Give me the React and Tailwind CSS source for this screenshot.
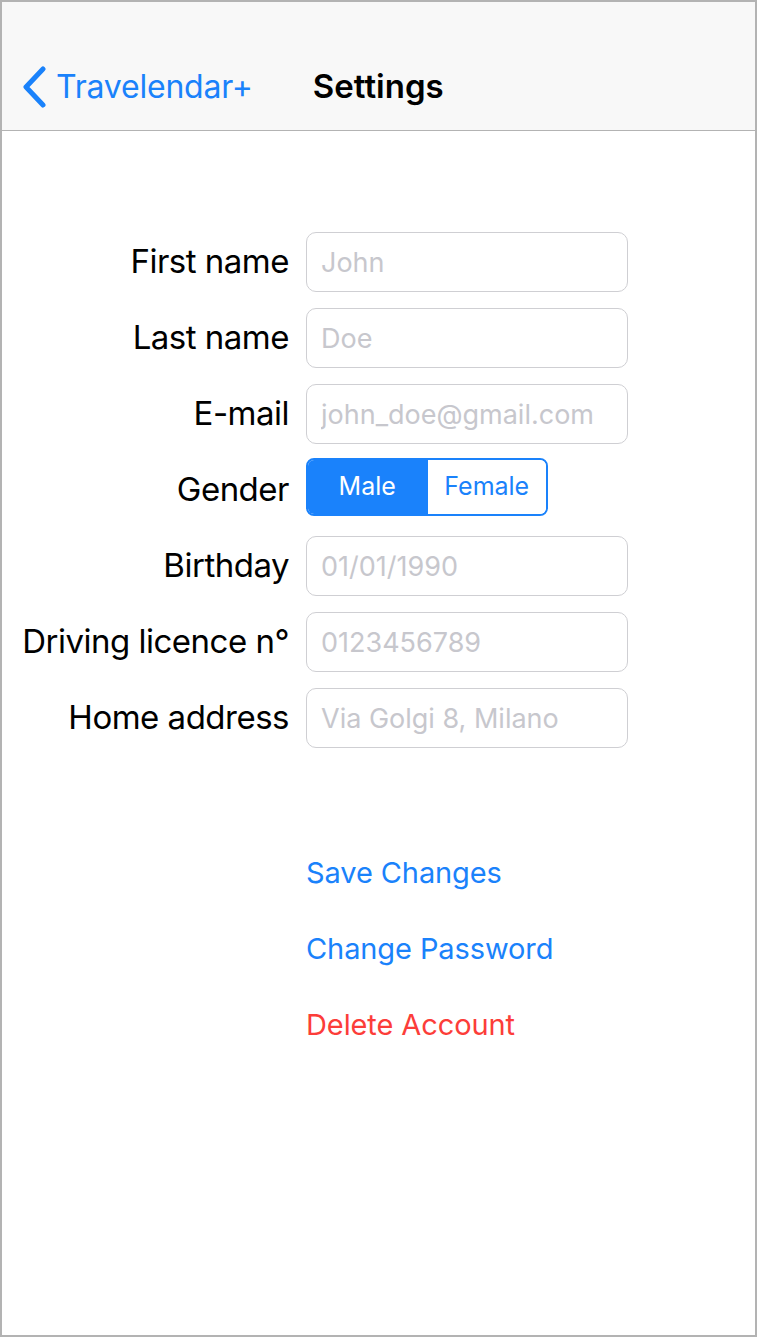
import React, { useState } from "react";

const fields = [
  { label: "First name", placeholder: "John" },
  { label: "Last name", placeholder: "Doe" },
  { label: "E-mail", placeholder: "john_doe@gmail.com" },
  { label: "Gender", gender: true },
  { label: "Birthday", placeholder: "01/01/1990" },
  { label: "Driving licence n°", placeholder: "0123456789" },
  { label: "Home address", placeholder: "Via Golgi 8, Milano" },
];

export default function App() {
  const [gender, setGender] = useState("male");

  return (
    <div className="w-[758px] h-[1340px] bg-white" style={{ fontFamily: "Inter, 'Liberation Sans', sans-serif" }}>
      <div className="w-[757px] h-[1337px] border-2 border-[#b3b3b3] flex flex-col">
        <div className="h-[129px] bg-[#f8f8f8] border-b border-[#b3b3b3] flex items-end pb-[19px]">
          <div className="flex items-center pl-[19px] text-[#1a82fb]">
            <svg width="28" height="42" viewBox="0 0 28 42" fill="none">
              <path d="M22 3 L5 21 L22 39" stroke="#1a82fb" strokeWidth="5" strokeLinecap="round" strokeLinejoin="round" />
            </svg>
            <span className="ml-[7px] text-[32px] tracking-[-0.2px]">Travelendar+</span>
          </div>
          <span className="ml-[60px] text-[33px] font-semibold text-black">Settings</span>
        </div>

        <div className="pt-[101px] flex flex-col gap-[16px]">
          {fields.map((f) => (
            <div key={f.label} className="flex items-center h-[60px]">
              <div className="w-[287px] text-right text-[33px] text-black tracking-[-0.5px] whitespace-nowrap">{f.label}</div>
              {f.gender ? (
                <div className="ml-[17px] mb-[6px] flex w-[242px] h-[58px] border-2 border-[#1a82fb] rounded-[8px] overflow-hidden text-[25px]">
                  <button
                    onClick={() => setGender("male")}
                    className={gender === "male" ? "flex-1 bg-[#1a82fb] text-white" : "flex-1 bg-white text-[#1a82fb]"}
                  >
                    Male
                  </button>
                  <button
                    onClick={() => setGender("female")}
                    className={gender === "female" ? "flex-1 bg-[#1a82fb] text-white" : "flex-1 bg-white text-[#1a82fb] border-l border-[#1a82fb]"}
                  >
                    Female
                  </button>
                </div>
              ) : (
                <input
                  placeholder={f.placeholder}
                  className="ml-[17px] w-[322px] h-[60px] border border-[#cfcfd3] rounded-[10px] px-[14px] text-[27px] placeholder-[#c7c7cd] outline-none"
                />
              )}
            </div>
          ))}
        </div>

        <div className="mt-[87px] pl-[304px] flex flex-col">
          <button className="h-[76px] text-left text-[29px] tracking-[-0.1px] text-[#1a82fb]">Save Changes</button>
          <button className="h-[76px] text-left text-[29px] tracking-[-0.1px] text-[#1a82fb]">Change Password</button>
          <button className="h-[76px] text-left text-[29px] tracking-[-0.1px] text-[#fc3d39]">Delete Account</button>
        </div>
      </div>
    </div>
  );
}
